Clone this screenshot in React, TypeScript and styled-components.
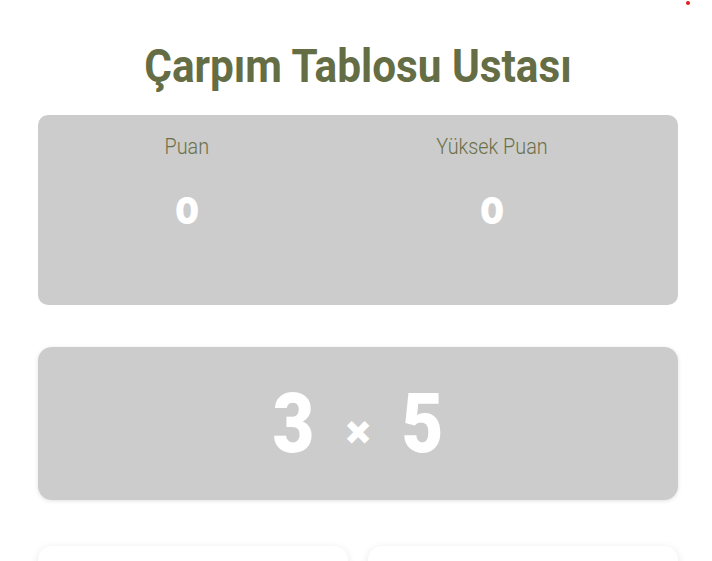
import styled, { createGlobalStyle } from "styled-components";

const GlobalStyle = createGlobalStyle`
  html, body {
    margin: 0;
    padding: 0;
    background: #ffffff;
    font-family: Roboto, "Liberation Sans", sans-serif;
  }
`;

const Page = styled.div`
  position: relative;
  width: 712px;
  height: 561px;
  overflow: hidden;
  box-sizing: border-box;
  padding: 39px 34px 0 38px;
`;

const StatusDot = styled.span`
  position: absolute;
  top: 1px;
  right: 22px;
  width: 4px;
  height: 4px;
  border-radius: 50%;
  background: #e21b1b;
`;

const Title = styled.h1`
  margin: 0 0 22px;
  text-align: center;
  font-family: Roboto, sans-serif;
  font-weight: 700;
  font-size: 47px;
  line-height: 54px;
  color: #656d45;
  letter-spacing: 0;
  transform: scaleX(0.9);
`;

const ScoreBoard = styled.div`
  display: flex;
  justify-content: space-around;
  align-items: flex-start;
  box-sizing: border-box;
  height: 190px;
  padding: 19px 15px;
  background: #cccccc;
  border-radius: 10px;
`;

const ScoreItem = styled.div`
  display: flex;
  flex-direction: column;
  align-items: center;
`;

const ScoreLabel = styled.div`
  font-family: Roboto, sans-serif;
  font-weight: 300;
  font-size: 22px;
  line-height: 26px;
  color: #6b7048;
  transform: scaleX(0.9);
`;

const ScoreValue = styled.div`
  margin-top: 28px;
  font-family: Inter, sans-serif;
  font-weight: 900;
  font-size: 37px;
  line-height: 46px;
  color: #ffffff;
  transform: scaleX(0.9);
`;

const Question = styled.div`
  display: flex;
  justify-content: center;
  align-items: center;
  gap: 26px;
  height: 153px;
  margin-top: 42px;
  background: #cccccc;
  border-radius: 14px;
  box-shadow: 0 1px 4px rgba(0, 0, 0, 0.12);
  color: #ffffff;
`;

const Operand = styled.span`
  font-family: Roboto, sans-serif;
  font-weight: 900;
  font-size: 84px;
  line-height: 1;
  transform: scaleX(0.86);
`;

const Times = styled.span`
  font-family: Inter, sans-serif;
  font-weight: 900;
  font-size: 40px;
  line-height: 1;
  margin-top: 12px;
`;

const Answers = styled.div`
  display: grid;
  grid-template-columns: 1fr 1fr;
  gap: 20px;
  margin-top: 46px;
`;

const AnswerButton = styled.button`
  height: 80px;
  border: none;
  border-radius: 14px;
  background: #ffffff;
  box-shadow: 0 2px 8px rgba(0, 0, 0, 0.1);
`;

export default function App() {
  return (
    <>
      <GlobalStyle />
      <Page>
        <StatusDot />
        <Title>Çarpım Tablosu Ustası</Title>
        <ScoreBoard>
          <ScoreItem>
            <ScoreLabel>Puan</ScoreLabel>
            <ScoreValue>0</ScoreValue>
          </ScoreItem>
          <ScoreItem>
            <ScoreLabel>Yüksek Puan</ScoreLabel>
            <ScoreValue>0</ScoreValue>
          </ScoreItem>
        </ScoreBoard>
        <Question>
          <Operand>3</Operand>
          <Times>×</Times>
          <Operand>5</Operand>
        </Question>
        <Answers>
          <AnswerButton />
          <AnswerButton />
        </Answers>
      </Page>
    </>
  );
}
